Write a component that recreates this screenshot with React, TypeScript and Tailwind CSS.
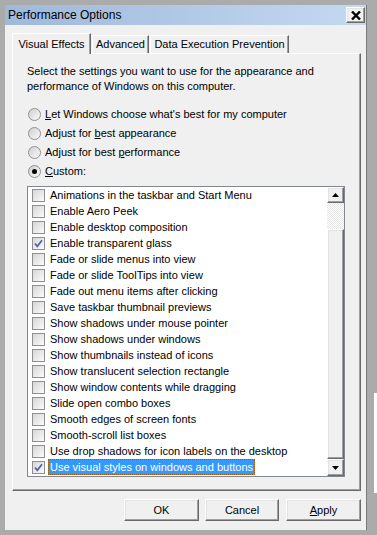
import React from 'react'

const effects = [
  'Animations in the taskbar and Start Menu',
  'Enable Aero Peek',
  'Enable desktop composition',
  'Enable transparent glass',
  'Fade or slide menus into view',
  'Fade or slide ToolTips into view',
  'Fade out menu items after clicking',
  'Save taskbar thumbnail previews',
  'Show shadows under mouse pointer',
  'Show shadows under windows',
  'Show thumbnails instead of icons',
  'Show translucent selection rectangle',
  'Show window contents while dragging',
  'Slide open combo boxes',
  'Smooth edges of screen fonts',
  'Smooth-scroll list boxes',
  'Use drop shadows for icon labels on the desktop',
  'Use visual styles on windows and buttons',
]
const checked = [3, 17]

const raised =
  'border border-t-white border-l-white border-r-[#696969] border-b-[#696969] shadow-[inset_-1px_-1px_0_#a0a0a0,inset_1px_1px_0_#e3e3e3] bg-[#f0f0f0]'

function Radio({ on }: { on?: boolean }) {
  return (
    <span className="w-[13px] h-[13px] shrink-0 rounded-full border border-[#8f8f8f] bg-gradient-to-br from-[#cfcfcf] to-[#fbfbfb] flex items-center justify-center">
      {on && <span className="w-[5px] h-[5px] rounded-full bg-black" />}
    </span>
  )
}

function Checkbox({ on }: { on?: boolean }) {
  return (
    <span className="w-[13px] h-[13px] shrink-0 border border-[#8f8f8f] bg-gradient-to-br from-[#d6d6d6] to-[#fbfbfb] flex items-center justify-center">
      {on && (
        <svg width="11" height="11" viewBox="0 0 11 11">
          <path d="M2 5.5 L4.3 8.3 L9 2.2" fill="none" stroke="#4b63a8" strokeWidth="1.7" />
        </svg>
      )}
    </span>
  )
}

function Arrow({ up }: { up?: boolean }) {
  return (
    <svg width="7" height="4" viewBox="0 0 7 4">
      <path d={up ? 'M0 4 L3.5 0 L7 4 Z' : 'M0 0 L3.5 4 L7 0 Z'} fill="#000" />
    </svg>
  )
}

function Tab({ label, active, w }: { label: string; active?: boolean; w: string }) {
  return (
    <div
      className={`${w} ${
        active ? 'h-[21px] -mb-px z-10 border-b-0' : 'h-[18px]'
      } flex items-center justify-center bg-[#f0f0f0] border-t border-l border-t-white border-l-white border-r border-r-[#696969] shadow-[inset_-1px_0_0_#a0a0a0]`}
    >
      {label}
    </div>
  )
}

function App() {
  return (
    <div className="w-[377px] h-[535px] bg-[#ababab] overflow-hidden flex pt-[5px] pl-[5px] font-['Liberation_Sans',Arial,sans-serif] text-[11px] text-black leading-none">
      <div className="w-[362px] h-[525px] shrink-0 bg-[#f0f0f0] border-r border-[#7a7a7a] flex flex-col">
        {/* title bar */}
        <div className="h-[20px] shrink-0 flex items-center justify-between pl-[3px] pr-[1px] bg-gradient-to-r from-[#9fb9d9] to-[#c4d9f1]">
          <span className="text-[12px]">Performance Options</span>
          <div className={`w-[19px] h-[16px] ${raised} flex items-center justify-center`}>
            <svg width="10" height="9" viewBox="0 0 10 9">
              <path d="M1 0.5 L9 8.5 M9 0.5 L1 8.5" stroke="#000" strokeWidth="2.4" />
            </svg>
          </div>
        </div>

        {/* tabs */}
        <div className="mt-[8px] ml-[7px] flex items-end gap-[1px] h-[20px] relative">
          <Tab label="Visual Effects" active w="w-[79px]" />
          <Tab label="Advanced" w="w-[57px]" />
          <Tab label="Data Execution Prevention" w="w-[139px]" />
        </div>

        {/* panel */}
        <div className="ml-[7px] w-[349px] h-[438px] shrink-0 border border-t-white border-l-white border-r-[#696969] border-b-[#696969] shadow-[inset_-1px_-1px_0_#a0a0a0] pl-[14px] pt-[10px] flex flex-col">
          <p className="leading-[15px]">
            Select the settings you want to use for the appearance and
            <br />
            performance of Windows on this computer.
          </p>
          <div className="mt-[11px] flex flex-col">
            <label className="h-[19px] flex items-center gap-[4px] pl-[1px]">
              <Radio />
              <span>
                <u>L</u>et Windows choose what's best for my computer
              </span>
            </label>
            <label className="h-[19px] flex items-center gap-[4px] pl-[1px]">
              <Radio />
              <span>
                Adjust for <u>b</u>est appearance
              </span>
            </label>
            <label className="h-[19px] flex items-center gap-[4px] pl-[1px]">
              <Radio />
              <span>
                Adjust for best <u>p</u>erformance
              </span>
            </label>
            <label className="h-[19px] flex items-center gap-[4px] pl-[1px]">
              <Radio on />
              <span>
                <u>C</u>ustom:
              </span>
            </label>
          </div>

          {/* list box */}
          <div className="mt-[5px] w-[318px] h-[291px] border border-[#828790] bg-white flex">
            <div className="flex-1 flex flex-col">
              {effects.map((e, i) => {
                const sel = i === effects.length - 1
                return (
                  <div key={e} className="h-[16px] shrink-0 flex items-center pl-[4px]">
                    <Checkbox on={checked.includes(i)} />
                    <span
                      className={`ml-[3px] h-[16px] flex items-center px-[1px] border ${
                        sel
                          ? 'bg-[#3399ff] text-white border-dotted border-[#a05a10]'
                          : 'border-transparent'
                      }`}
                    >
                      {e}
                    </span>
                  </div>
                )
              })}
            </div>
            <div className="w-[17px] flex flex-col">
              <div className={`h-[16px] ${raised} flex items-center justify-center`}>
                <Arrow up />
              </div>
              <div className="h-[26px] bg-[repeating-conic-gradient(#ffffff_0_25%,#e6e6e6_0_50%)] bg-[length:2px_2px]" />
              <div className={`flex-1 ${raised}`} />
              <div className={`h-[17px] ${raised} flex items-center justify-center`}>
                <Arrow />
              </div>
            </div>
          </div>
        </div>

        {/* buttons */}
        <div className="mt-[8px] pr-[5px] flex justify-end">
          <button className={`w-[75px] h-[22px] ${raised}`}>OK</button>
          <button className={`ml-[6px] w-[74px] h-[22px] ${raised}`}>Cancel</button>
          <button className={`ml-[7px] w-[75px] h-[22px] ${raised}`}>
            <u>A</u>pply
          </button>
        </div>
      </div>
      <div className="ml-auto w-[3px] flex flex-col">
        <div className="mt-[388px] h-[100px] bg-white" />
      </div>
    </div>
  )
}

export default App
